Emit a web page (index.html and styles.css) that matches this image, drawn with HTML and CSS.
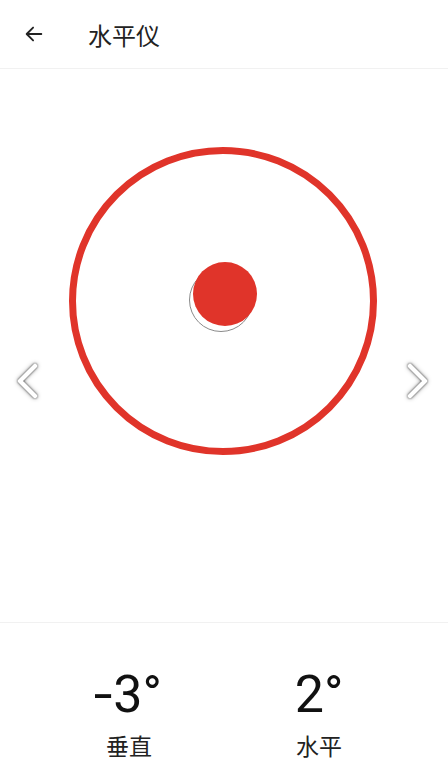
FILE: index.html
```html
<!DOCTYPE html>
<html lang="zh-CN">
<head>
  <meta charset="UTF-8">
  <meta name="viewport" content="width=device-width, initial-scale=1.0">
  <title>水平仪</title>
  <link rel="stylesheet" href="styles.css">
</head>
<body>
  <div class="header">
    <button class="back" aria-label="返回">
      <svg width="22" height="22" viewBox="0 0 24 24">
        <path d="M20 12H5M11 5l-7 7 7 7" fill="none" stroke="#222" stroke-width="2" stroke-linecap="round" stroke-linejoin="round"/>
      </svg>
    </button>
    <h1>水平仪</h1>
  </div>

  <div class="stage">
    <div class="ring">
      <div class="center-mark"></div>
      <div class="bubble"></div>
    </div>
    <svg class="nav nav-left" width="30" height="40" viewBox="0 0 30 40">
      <path d="M21 4L6 19l15 15" fill="none" stroke="#fff" stroke-width="4.5" stroke-linecap="round" stroke-linejoin="round"/>
    </svg>
    <svg class="nav nav-right" width="30" height="40" viewBox="0 0 30 40">
      <path d="M9 4l15 15L9 34" fill="none" stroke="#fff" stroke-width="4.5" stroke-linecap="round" stroke-linejoin="round"/>
    </svg>
  </div>

  <div class="readout">
    <div class="angle">
      <div class="value"><span class="minus">-</span>3°</div>
      <div class="label">垂直</div>
    </div>
    <div class="angle">
      <div class="value">2°</div>
      <div class="label">水平</div>
    </div>
  </div>
</body>
</html>
```

FILE: styles.css
```css
body {
  margin: 0;
  background: #fff;
  font-family: 'Roboto', 'Noto Sans CJK SC', sans-serif;
  color: #111;
  height: 767px;
  overflow: hidden;
  display: flex;
  flex-direction: column;
}

.header {
  height: 69px;
  display: flex;
  align-items: center;
  border-bottom: 1px solid #f1f1f1;
  box-sizing: border-box;
  flex-shrink: 0;
}

.back {
  width: 70px;
  height: 69px;
  padding: 0 0 0 23px;
  border: none;
  background: none;
  display: flex;
  align-items: center;
}

.header h1 {
  margin: 0 0 0 18px;
  font-size: 24px;
  font-weight: 400;
  color: #222;
  font-family: 'Noto Sans CJK SC', sans-serif;
}

.stage {
  position: relative;
  height: 554px;
  display: flex;
  justify-content: center;
  padding-top: 78px;
  box-sizing: border-box;
  border-bottom: 1px solid #f1f1f1;
  flex-shrink: 0;
}

.ring {
  position: relative;
  width: 294px;
  height: 294px;
  border: 7px solid #e0342a;
  border-radius: 50%;
  margin-right: 2px;
}

.center-mark {
  position: absolute;
  left: 113px;
  top: 114px;
  width: 62px;
  height: 62px;
  border: 1.5px solid #8a8a8a;
  border-radius: 50%;
}

.bubble {
  position: absolute;
  left: 117px;
  top: 108px;
  width: 64px;
  height: 64px;
  background: #e0342a;
  border-radius: 50%;
}

.nav {
  position: absolute;
  top: 293px;
  filter: drop-shadow(0 0 1px rgba(0, 0, 0, 0.7)) drop-shadow(0 0 2px rgba(0, 0, 0, 0.35));
}

.nav-left {
  left: 14px;
}

.nav-right {
  right: 17px;
}

.readout {
  flex: 1;
  display: grid;
  grid-template-columns: 190px 190px;
  justify-content: center;
  padding-top: 42px;
}

.angle {
  display: flex;
  flex-direction: column;
  align-items: center;
}

.value {
  font-size: 52px;
  font-weight: 400;
  line-height: 60px;
  color: #111;
}

.minus {
  display: inline-block;
  transform: scaleX(1.3);
  margin-right: 3px;
}

.label {
  margin-top: 6px;
  font-size: 23px;
  line-height: 28px;
  color: #222;
  font-family: 'Noto Sans CJK SC', sans-serif;
}
```
